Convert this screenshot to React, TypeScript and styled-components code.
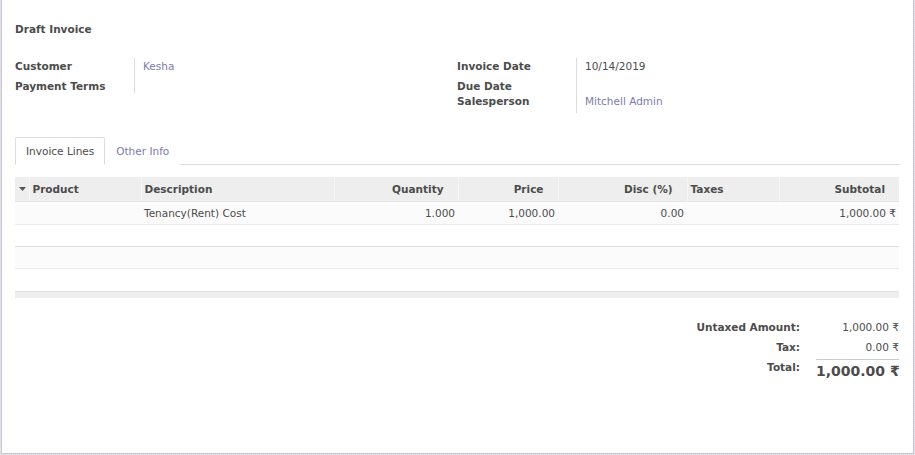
import React from "react";
import styled, { createGlobalStyle } from "styled-components";

const Global = createGlobalStyle`
  *, *::before, *::after { box-sizing: border-box; }
  html, body { margin: 0; padding: 0; }
  body {
    width: 915px;
    height: 455px;
    overflow: hidden;
    background-color: #e4e2e8;
    background-image: repeating-conic-gradient(#d8d6de 0 25%, #eceaf0 0 50%);
    background-size: 2px 2px;
    font-family: "DejaVu Sans", Verdana, sans-serif;
    font-size: 10.5px;
    color: #4c4c4c;
  }
`;

const Page = styled.div`
  padding: 0 1px 1px 1px;
`;

const Sheet = styled.div`
  width: 913px;
  height: 454px;
  background: #fff;
  border: 1px solid #c9c7d0;
  border-top: none;
  padding: 0 13px;
`;

const Title = styled.h1`
  margin: 0;
  padding-top: 22px;
  font-size: 10.5px;
  font-weight: bold;
  line-height: 14px;
`;

const Groups = styled.div`
  display: grid;
  grid-template-columns: 442px 1fr;
  margin-top: 22px;
`;

const FieldGrid = styled.div`
  display: grid;
  grid-template-columns: 120px 1fr;
  align-content: start;
`;

const Label = styled.div<{ $h: number }>`
  font-weight: bold;
  height: ${(p) => p.$h}px;
  line-height: 14px;
  padding-top: 1px;
  border-right: 1px solid #dcdcdc;
  white-space: nowrap;
`;

const Value = styled.div<{ $link?: boolean; $h: number }>`
  height: ${(p) => p.$h}px;
  line-height: 14px;
  padding-top: 1px;
  padding-left: 8px;
  color: ${(p) => (p.$link ? "#7c7bad" : "#4c4c4c")};
`;

const Tabs = styled.div`
  display: flex;
  margin-top: 24px;
  border-bottom: 1px solid #dddddd;
  height: 28px;
`;

const Tab = styled.div<{ $active?: boolean }>`
  height: 28px;
  padding: 0 10px;
  line-height: 26px;
  border: 1px solid ${(p) => (p.$active ? "#dddddd" : "transparent")};
  border-bottom-color: ${(p) => (p.$active ? "#fff" : "transparent")};
  background: #fff;
  color: ${(p) => (p.$active ? "#4c4c4c" : "#7c7bad")};
  border-radius: 2px 2px 0 0;
`;

const Table = styled.table`
  margin-top: 12px;
  width: 884px;
  table-layout: fixed;
  border-collapse: collapse;
  border-spacing: 0;
`;

const Th = styled.th<{ $right?: boolean }>`
  background: #eeeeee;
  height: 24px;
  padding: 0 ${(p) => (p.$right ? "14px" : "3px")} 0 3px;
  text-align: ${(p) => (p.$right ? "right" : "left")};
  font-weight: bold;
  border-left: 1px solid #f7f7f7;
  border-bottom: 1px solid #e4e4e4;
  white-space: nowrap;
  overflow: hidden;
  &:first-child { border-left: none; padding: 0 0 0 4px; }
`;

const Tr = styled.tr<{ $shade?: boolean; $strong?: boolean; $h: number }>`
  background: ${(p) => (p.$shade ? "#fbfbfb" : "#fff")};
  & > td {
    height: ${(p) => p.$h}px;
    border-bottom: 1px solid ${(p) => (p.$strong ? "#dedede" : "#ebebeb")};
  }
`;

const Td = styled.td<{ $right?: boolean }>`
  padding: 0 3px;
  text-align: ${(p) => (p.$right ? "right" : "left")};
  white-space: nowrap;
  overflow: hidden;
`;

const FootRow = styled.tr`
  & > td {
    height: 7px;
    padding: 0;
    background: #eeeeee;
    border-top: 1px solid #e0e0e0;
  }
`;

const SpacerRow = styled.tr`
  & > td { height: 23px; padding: 0; }
`;

const Totals = styled.div`
  display: grid;
  grid-template-columns: 1fr 83px;
  column-gap: 16px;
  margin-top: 19px;
  width: 884px;
`;

const TLabel = styled.div<{ $total?: boolean }>`
  font-weight: bold;
  text-align: right;
  line-height: 20px;
  ${(p) => (p.$total ? "padding-top: 2px; line-height: 16px;" : "")}
`;

const TValue = styled.div<{ $total?: boolean }>`
  line-height: 20px;
  text-align: right;
  white-space: nowrap;
  ${(p) =>
    p.$total
      ? "margin-top: 2px; border-top: 1px solid #cccccc; padding-top: 1px; font-size: 14px; font-weight: bold; line-height: 20px;"
      : ""}
`;

const Caret = () => (
  <svg width="7" height="4" viewBox="0 0 7 4" style={{ display: "block" }}>
    <path d="M0 0 L7 0 L3.5 4 Z" fill="#555" />
  </svg>
);

export default function App() {
  return (
    <>
      <Global />
      <Page>
        <Sheet>
          <Title>Draft Invoice</Title>
          <Groups>
            <FieldGrid>
              <Label $h={20}>Customer</Label>
              <Value $h={20} $link>Kesha</Value>
              <Label $h={15}>Payment Terms</Label>
              <Value $h={15}></Value>
            </FieldGrid>
            <FieldGrid>
              <Label $h={20}>Invoice Date</Label>
              <Value $h={20}>10/14/2019</Value>
              <Label $h={15}>Due Date</Label>
              <Value $h={15}></Value>
              <Label $h={20}>Salesperson</Label>
              <Value $h={20} $link>Mitchell Admin</Value>
            </FieldGrid>
          </Groups>
          <Tabs>
            <Tab $active>Invoice Lines</Tab>
            <Tab>Other Info</Tab>
          </Tabs>
          <Table>
            <colgroup>
              <col style={{ width: 14 }} />
              <col style={{ width: 112 }} />
              <col style={{ width: 193 }} />
              <col style={{ width: 124 }} />
              <col style={{ width: 100 }} />
              <col style={{ width: 129 }} />
              <col style={{ width: 92 }} />
              <col style={{ width: 120 }} />
            </colgroup>
            <thead>
              <tr>
                <Th><Caret /></Th>
                <Th>Product</Th>
                <Th>Description</Th>
                <Th $right>Quantity</Th>
                <Th $right>Price</Th>
                <Th $right>Disc (%)</Th>
                <Th>Taxes</Th>
                <Th $right>Subtotal</Th>
              </tr>
            </thead>
            <tbody>
              <Tr $shade $h={23}>
                <Td></Td>
                <Td></Td>
                <Td>Tenancy(Rent) Cost</Td>
                <Td $right>1.000</Td>
                <Td $right>1,000.00</Td>
                <Td $right>0.00</Td>
                <Td></Td>
                <Td $right>1,000.00 ₹</Td>
              </Tr>
              <Tr $strong $h={22}>
                <Td colSpan={8}></Td>
              </Tr>
              <Tr $shade $h={22}>
                <Td colSpan={8}></Td>
              </Tr>
              <SpacerRow>
                <td colSpan={8}></td>
              </SpacerRow>
            </tbody>
            <tfoot>
              <FootRow>
                <td colSpan={8}></td>
              </FootRow>
            </tfoot>
          </Table>
          <Totals>
            <TLabel>Untaxed Amount:</TLabel>
            <TValue>1,000.00 ₹</TValue>
            <TLabel>Tax:</TLabel>
            <TValue>0.00 ₹</TValue>
            <TLabel $total>Total:</TLabel>
            <TValue $total>1,000.00 ₹</TValue>
          </Totals>
        </Sheet>
      </Page>
    </>
  );
}
